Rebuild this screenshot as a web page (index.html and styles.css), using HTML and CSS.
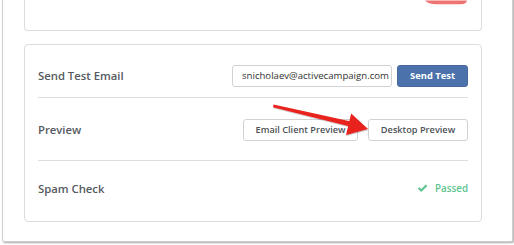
FILE: index.html
```html
<!DOCTYPE html>
<html>
<head>
<meta charset="utf-8">
<link rel="stylesheet" href="styles.css">
</head>
<body>
<div class="frame">
  <div class="card card-top">
    <svg class="red-edge" width="44" height="6" viewBox="0 0 44 6"><path d="M0,0.5 L42,0.5 Q41.5,4.2 36,4.2 L11,4.2 Q3,4.2 0,0.5 Z" fill="#ef7373"/></svg>
  </div>
  <div class="card card-main">
    <div class="row row-send">
      <div class="label">Send Test Email</div>
      <div class="controls">
        <div class="input">snicholaev@activecampaign.com</div>
        <button class="btn btn-primary">Send Test</button>
      </div>
    </div>
    <div class="row row-preview">
      <div class="label">Preview</div>
      <div class="controls gap-preview">
        <button class="btn btn-default btn-email">Email Client Preview</button>
        <button class="btn btn-default btn-desktop">Desktop Preview</button>
      </div>
    </div>
    <div class="row row-spam">
      <div class="label">Spam Check</div>
      <div class="passed">
        <svg width="11" height="9" viewBox="0 0 12 10"><path d="M0.8,5.2 L2.6,3.5 L4.6,5.5 L9.6,0.6 L11.4,2.3 L4.6,9 Z" fill="#5cc48f"/></svg>
        <span>Passed</span>
      </div>
    </div>
  </div>
</div>
<svg class="arrow" width="514" height="245" viewBox="0 0 514 245">
  <defs>
    <filter id="sh" x="-10%" y="-10%" width="130%" height="140%">
      <feDropShadow dx="0.5" dy="1" stdDeviation="0.6" flood-color="#000" flood-opacity="0.25"/>
    </filter>
  </defs>
  <g filter="url(#sh)" fill="#e8211d">
    <path d="M273.5,104.6 L351,121.6 L350,126.6 L273,107.2 Z"/>
    <path d="M368,129 L351.2,113.5 L346,135 Z"/>
  </g>
</svg>
</body>
</html>
```

FILE: styles.css
```css
* { box-sizing: border-box; }
html, body {
  margin: 0;
  padding: 0;
  background: #ffffff;
  width: 514px;
  height: 245px;
  overflow: hidden;
}
body {
  font-family: "Open Sans", "Liberation Sans", sans-serif;
  position: relative;
}
.frame {
  margin-left: 2px;
  margin-top: -6px;
  width: 511px;
  height: 248px;
  background: #fff;
  border: 1px solid #cfcfcf;
  border-radius: 0 0 2px 2px;
  box-shadow: 1px 1px 2px rgba(0,0,0,0.35);
  padding: 0 30px 0 21px;
  display: flex;
  flex-direction: column;
}
.card {
  border: 1px solid #dcdcdc;
  border-radius: 4px;
  background: #fff;
  width: 458px;
}
.card-top {
  height: 36px;
  border-top: none;
  border-top-left-radius: 0;
  border-top-right-radius: 0;
  position: relative;
}
.red-edge {
  position: absolute;
  left: 400px;
  top: 5px;
}
.card-main {
  margin-top: 13px;
  height: 178px;
  padding: 9px 13px 0 13px;
  display: flex;
  flex-direction: column;
}
.row {
  display: flex;
  align-items: center;
  justify-content: space-between;
}
.row-send {
  height: 44px;
  border-bottom: 1px solid #dedede;
}
.row-preview {
  height: 63px;
  border-bottom: 1px solid #dedede;
  padding-top: 1px;
}
.row-spam {
  height: 54px;
}
.label {
  font-size: 11.3px;
  font-weight: 600;
  color: #555a60;
}
.controls {
  display: flex;
  align-items: center;
  gap: 5px;
}
.gap-preview { gap: 10px; }
.input {
  width: 160px;
  height: 22px;
  border: 1px solid #d2d2d2;
  border-radius: 3px;
  font-size: 9.6px;
  color: #333;
  padding: 0 0 0 9px;
  line-height: 20px;
  white-space: nowrap;
  overflow: hidden;
}
.btn {
  font-family: "Open Sans", "Liberation Sans", sans-serif;
  font-weight: 600;
  font-size: 9.2px;
  height: 22px;
  border-radius: 3px;
  padding: 0;
  margin: 0;
  cursor: pointer;
  white-space: nowrap;
}
.btn-primary {
  width: 71px;
  background: #4b72ab;
  border: 1px solid #45699f;
  color: #ffffff;
  font-weight: 700;
  font-size: 9.4px;
}
.btn-default {
  background: #fff;
  border: 1px solid #d2d2d2;
  color: #4d5257;
  height: 22px;
}
.btn-email { width: 115px; }
.btn-desktop { width: 100px; }
.passed {
  display: flex;
  align-items: center;
  gap: 7px;
  color: #5cc48f;
  font-size: 9.8px;
  font-weight: 600;
}
.arrow {
  position: absolute;
  left: 0;
  top: 0;
  pointer-events: none;
}
```
